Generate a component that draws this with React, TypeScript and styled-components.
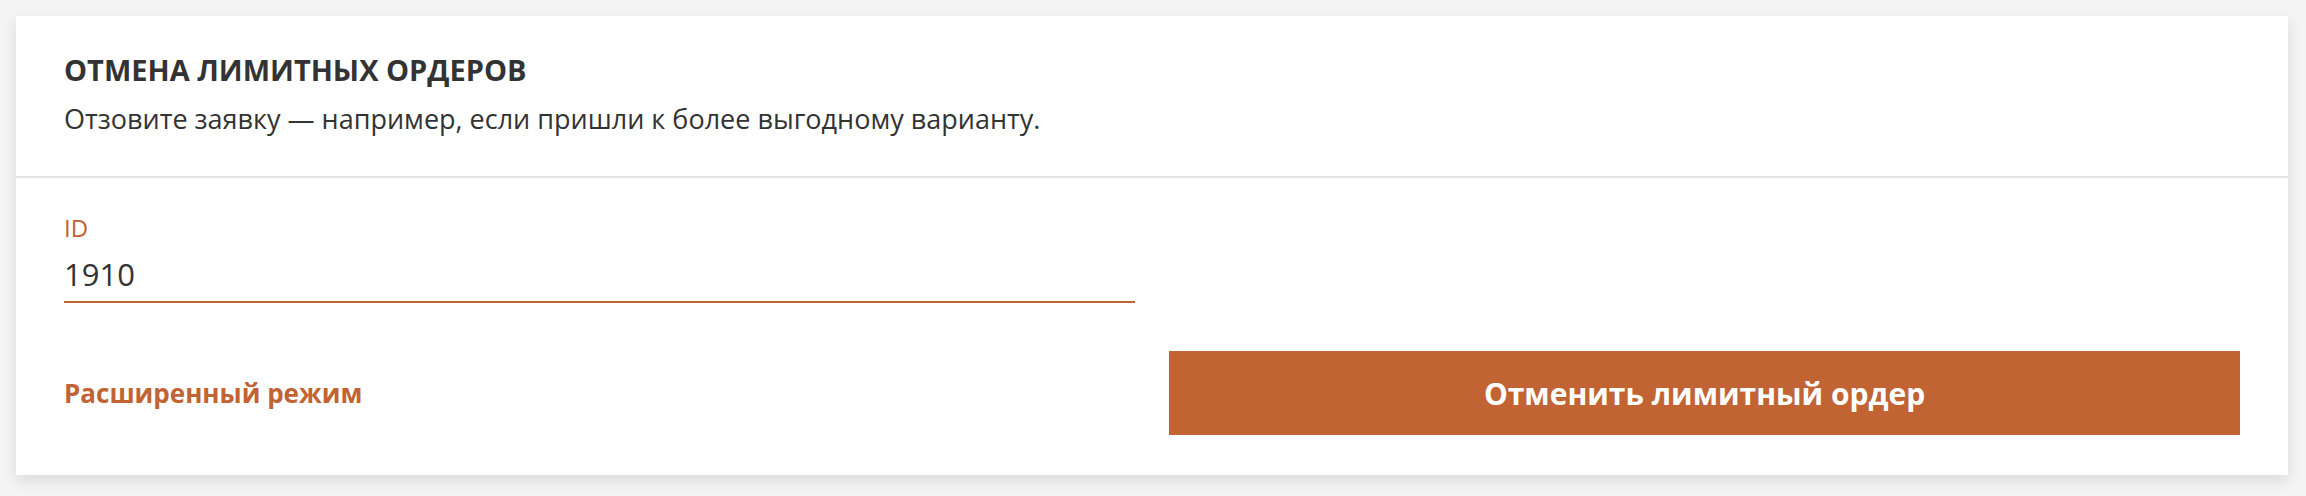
import React from "react";
import styled, { createGlobalStyle } from "styled-components";

const Global = createGlobalStyle`
  html, body {
    margin: 0;
    padding: 0;
    background: #f4f4f4;
  }
  body {
    font-family: "Open Sans", "Noto Sans", sans-serif;
    color: #333333;
  }
`;

const Page = styled.div`
  padding: 16px 18px 21px 16px;
`;

const Card = styled.section`
  background: #ffffff;
  box-shadow: 0 6px 14px rgba(0, 0, 0, 0.1);
`;

const Header = styled.header`
  padding: 36px 48px 39px;
  border-bottom: 2px solid #e3e3e3;
`;

const Title = styled.h2`
  margin: 0;
  font-size: 29px;
  line-height: 36px;
  font-weight: 700;
  color: #333333;
`;

const Subtitle = styled.p`
  margin: 13px 0 0;
  font-size: 27px;
  line-height: 36px;
  color: #333333;
`;

const Body = styled.div`
  display: grid;
  grid-template-columns: 1fr 1fr;
  column-gap: 34px;
  row-gap: 48px;
  padding: 36px 48px 40px;
  align-items: center;
`;

const Field = styled.label`
  display: flex;
  flex-direction: column;
  border-bottom: 2px solid #c26333;
`;

const FieldLabel = styled.span`
  font-size: 24px;
  line-height: 28px;
  color: #c26333;
`;

const FieldInput = styled.input`
  border: none;
  outline: none;
  padding: 12px 0 7px;
  margin: 0;
  font-family: inherit;
  font-size: 31px;
  line-height: 40px;
  height: 59px;
  box-sizing: border-box;
  color: #333333;
  background: transparent;
`;

const Spacer = styled.div``;

const LinkButton = styled.button`
  justify-self: start;
  border: none;
  background: none;
  padding: 0;
  font-family: inherit;
  font-size: 26px;
  font-weight: 700;
  color: #c26333;
  cursor: pointer;
`;

const PrimaryButton = styled.button`
  height: 84px;
  border: none;
  background: #c26333;
  color: #ffffff;
  font-family: inherit;
  font-size: 30px;
  font-weight: 700;
  cursor: pointer;
`;

export default function App() {
  return (
    <>
      <Global />
      <Page>
        <Card>
          <Header>
            <Title>ОТМЕНА ЛИМИТНЫХ ОРДЕРОВ</Title>
            <Subtitle>
              Отзовите заявку — например, если пришли к более выгодному варианту.
            </Subtitle>
          </Header>
          <Body>
            <Field>
              <FieldLabel>ID</FieldLabel>
              <FieldInput defaultValue="1910" />
            </Field>
            <Spacer />
            <LinkButton type="button">Расширенный режим</LinkButton>
            <PrimaryButton type="button">Отменить лимитный ордер</PrimaryButton>
          </Body>
        </Card>
      </Page>
    </>
  );
}
